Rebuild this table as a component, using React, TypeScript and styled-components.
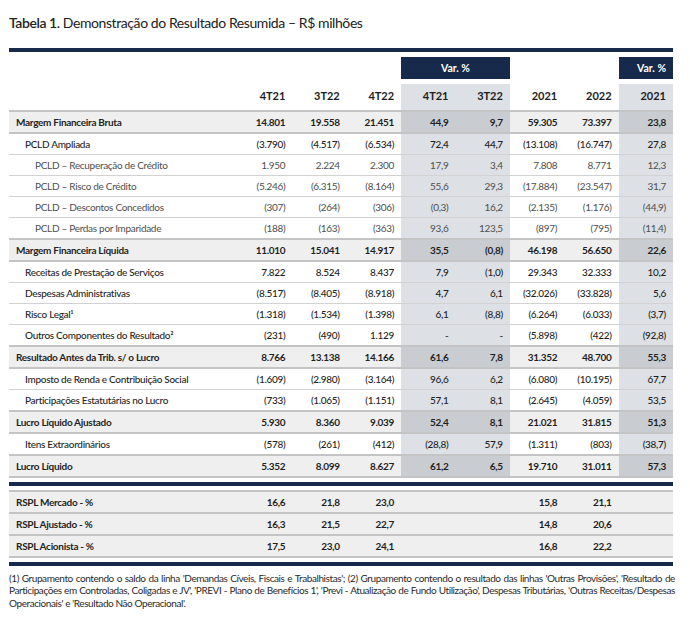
import React from "react";
import styled, { createGlobalStyle } from "styled-components";

const GlobalStyle = createGlobalStyle`
  html, body { margin: 0; padding: 0; background: #ffffff; }
  body { font-family: Lato, "Open Sans", Arial, sans-serif; color: #222; }
`;

const NAVY = "#172a4c";
const COLS = "229px repeat(8, 54.375px)";

const Page = styled.div`
  width: 664px;
  padding: 13px 0 0 9px;
`;

const Title = styled.h1`
  margin: 0;
  font-size: 14px;
  line-height: 19px;
  font-weight: 400;
  color: #222;
  letter-spacing: -0.42px;
  b { font-weight: 600; }
`;

const NavyBar = styled.div<{ $mt: number }>`
  height: 4px;
  margin-top: ${(p) => p.$mt}px;
  background: ${NAVY};
`;

const Grid = styled.div<{ $mt?: number; $h: number }>`
  display: grid;
  grid-template-columns: ${COLS};
  height: ${(p) => p.$h}px;
  margin-top: ${(p) => p.$mt ?? 0}px;
`;

const VarBox = styled.div<{ $col: string }>`
  grid-column: ${(p) => p.$col};
  background: ${NAVY};
  color: #fff;
  font-weight: 700;
  font-size: 10.5px;
  display: flex;
  align-items: center;
  justify-content: center;
`;

const VarBoxRight = styled(VarBox)`
  justify-content: flex-end;
  padding-right: 7px;
`;

const HeadCell = styled.div<{ $var?: boolean }>`
  background: ${(p) => (p.$var ? "#dde0e4" : "transparent")};
  font-size: 11px;
  font-weight: 700;
  color: #1d1d1d;
  display: flex;
  align-items: center;
  justify-content: flex-end;
  padding: 0 7px 4px 0;
`;

const Body = styled.div`
  border-top: 2px solid #c4c4c4;
`;

type Level = 0 | 1 | 2;

const Row = styled.div<{ $level: Level; $next?: boolean }>`
  display: grid;
  grid-template-columns: ${COLS};
  height: 20px;
  background: ${(p) => (p.$level === 0 ? "#efefef" : "#ffffff")};
  border-bottom: ${(p) => (p.$level === 0 || p.$next ? "2px solid #c4c4c4" : "1px solid #d2d2d2")};
  font-size: 10px;
  letter-spacing: -0.3px;
  font-weight: ${(p) => (p.$level === 0 ? 700 : p.$level === 1 ? 500 : 400)};
  color: ${(p) => (p.$level === 2 ? "#4e4e4e" : "#1f1f1f")};
`;

const Label = styled.div<{ $level: Level }>`
  display: flex;
  align-items: center;
  padding-left: ${(p) => (p.$level === 0 ? 7 : p.$level === 1 ? 16 : 26)}px;
  white-space: nowrap;
`;

const Cell = styled.div<{ $shade?: string }>`
  display: flex;
  align-items: center;
  justify-content: flex-end;
  padding-right: 7px;
  background: ${(p) => p.$shade ?? "transparent"};
`;

const RsplBody = styled.div`
  border-top: 2px solid #c4c4c4;
  margin-top: 4px;
`;

const RsplRow = styled.div`
  display: grid;
  grid-template-columns: ${COLS};
  height: 20px;
  background: #efefef;
  border-bottom: 2px solid #c4c4c4;
  font-size: 10px;
  letter-spacing: -0.3px;
  font-weight: 700;
  color: #1f1f1f;
`;

const Footnote = styled.p`
  margin: 6px 0 0 0;
  font-size: 10px;
  line-height: 12.3px;
  letter-spacing: -0.42px;
  color: #2a2a2a;
  text-align: justify;
  width: 666px;
`;

type DataRow = { label: string; level: Level; v: string[] };

const rows: DataRow[] = [
  { label: "Margem Financeira Bruta", level: 0, v: ["14.801", "19.558", "21.451", "44,9", "9,7", "59.305", "73.397", "23,8"] },
  { label: "PCLD Ampliada", level: 1, v: ["(3.790)", "(4.517)", "(6.534)", "72,4", "44,7", "(13.108)", "(16.747)", "27,8"] },
  { label: "PCLD – Recuperação de Crédito", level: 2, v: ["1.950", "2.224", "2.300", "17,9", "3,4", "7.808", "8.771", "12,3"] },
  { label: "PCLD – Risco de Crédito", level: 2, v: ["(5.246)", "(6.315)", "(8.164)", "55,6", "29,3", "(17.884)", "(23.547)", "31,7"] },
  { label: "PCLD – Descontos Concedidos", level: 2, v: ["(307)", "(264)", "(306)", "(0,3)", "16,2", "(2.135)", "(1.176)", "(44,9)"] },
  { label: "PCLD – Perdas por Imparidade", level: 2, v: ["(188)", "(163)", "(363)", "93,6", "123,5", "(897)", "(795)", "(11,4)"] },
  { label: "Margem Financeira Líquida", level: 0, v: ["11.010", "15.041", "14.917", "35,5", "(0,8)", "46.198", "56.650", "22,6"] },
  { label: "Receitas de Prestação de Serviços", level: 1, v: ["7.822", "8.524", "8.437", "7,9", "(1,0)", "29.343", "32.333", "10,2"] },
  { label: "Despesas Administrativas", level: 1, v: ["(8.517)", "(8.405)", "(8.918)", "4,7", "6,1", "(32.026)", "(33.828)", "5,6"] },
  { label: "Risco Legal¹", level: 1, v: ["(1.318)", "(1.534)", "(1.398)", "6,1", "(8,8)", "(6.264)", "(6.033)", "(3,7)"] },
  { label: "Outros Componentes do Resultado²", level: 1, v: ["(231)", "(490)", "1.129", "-", "-", "(5.898)", "(422)", "(92,8)"] },
  { label: "Resultado Antes da Trib. s/ o Lucro", level: 0, v: ["8.766", "13.138", "14.166", "61,6", "7,8", "31.352", "48.700", "55,3"] },
  { label: "Imposto de Renda e Contribuição Social", level: 1, v: ["(1.609)", "(2.980)", "(3.164)", "96,6", "6,2", "(6.080)", "(10.195)", "67,7"] },
  { label: "Participações Estatutárias no Lucro", level: 1, v: ["(733)", "(1.065)", "(1.151)", "57,1", "8,1", "(2.645)", "(4.059)", "53,5"] },
  { label: "Lucro Líquido Ajustado", level: 0, v: ["5.930", "8.360", "9.039", "52,4", "8,1", "21.021", "31.815", "51,3"] },
  { label: "Itens Extraordinários", level: 1, v: ["(578)", "(261)", "(412)", "(28,8)", "57,9", "(1.311)", "(803)", "(38,7)"] },
  { label: "Lucro Líquido", level: 0, v: ["5.352", "8.099", "8.627", "61,2", "6,5", "19.710", "31.011", "57,3"] },
];

const rspl = [
  { label: "RSPL Mercado - %", v: ["16,6", "21,8", "23,0", "", "", "15,8", "21,1", ""] },
  { label: "RSPL Ajustado - %", v: ["16,3", "21,5", "22,7", "", "", "14,8", "20,6", ""] },
  { label: "RSPL Acionista - %", v: ["17,5", "23,0", "24,1", "", "", "16,8", "22,2", ""] },
];

const VAR_IDX = [3, 4, 7];
const heads = ["4T21", "3T22", "4T22", "4T21", "3T22", "2021", "2022", "2021"];

export default function App() {
  return (
    <>
      <GlobalStyle />
      <Page>
        <Title>
          <b>Tabela 1.</b> Demonstração do Resultado Resumida – R$ milhões
        </Title>
        <NavyBar $mt={16} />
        <Grid $mt={5} $h={22}>
          <VarBox $col="5 / 7">Var. %</VarBox>
          <VarBoxRight $col="9 / 10">Var. %</VarBoxRight>
        </Grid>
        <Grid $mt={5} $h={26}>
          <HeadCell />
          {heads.map((h, i) => (
            <HeadCell key={i} $var={VAR_IDX.includes(i)}>
              {h}
            </HeadCell>
          ))}
        </Grid>
        <Body>
          {rows.map((r, ri) => {
            const next = rows[ri + 1];
            return (
              <Row key={ri} $level={r.level} $next={next ? next.level === 0 : false}>
                <Label $level={r.level}>{r.label}</Label>
                {r.v.map((val, i) => (
                  <Cell
                    key={i}
                    $shade={VAR_IDX.includes(i) ? (r.level === 0 ? "#c9cdd1" : "#dde0e4") : undefined}
                  >
                    {val}
                  </Cell>
                ))}
              </Row>
            );
          })}
        </Body>
        <NavyBar $mt={4} />
        <RsplBody>
          {rspl.map((r, ri) => (
            <RsplRow key={ri}>
              <Label $level={0}>{r.label}</Label>
              {r.v.map((val, i) => (
                <Cell key={i}>{val}</Cell>
              ))}
            </RsplRow>
          ))}
        </RsplBody>
        <NavyBar $mt={4} />
        <Footnote>
          (1) Grupamento contendo o saldo da linha 'Demandas Cíveis, Fiscais e Trabalhistas'; (2) Grupamento
          contendo o resultado das linhas 'Outras Provisões', 'Resultado de Participações em Controladas, Coligadas
          e JV', 'PREVI - Plano de Benefícios 1', 'Previ - Atualização de Fundo Utilização', Despesas Tributárias,
          'Outras Receitas/Despesas Operacionais' e 'Resultado Não Operacional'.
        </Footnote>
      </Page>
    </>
  );
}
